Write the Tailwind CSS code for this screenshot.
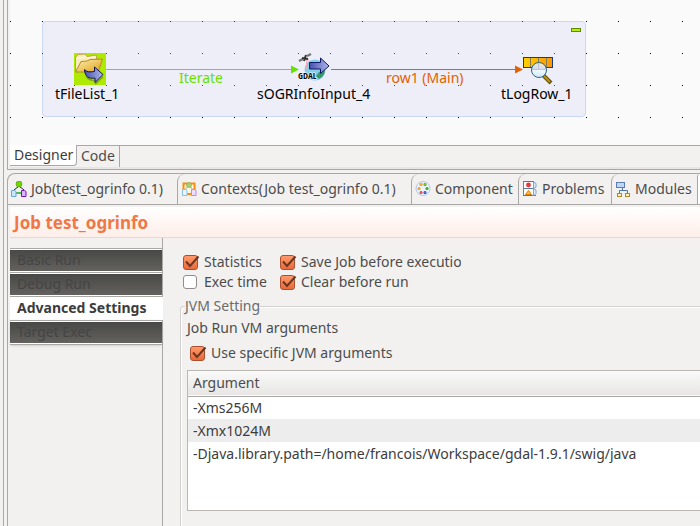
<!DOCTYPE html>
<html lang="en">
<head>
<meta charset="utf-8">
<title>Job test_ogrinfo</title>
<script src="https://cdn.jsdelivr.net/npm/@tailwindcss/browser@4"></script>
</head>
<body class="flex min-h-screen overflow-hidden bg-[#f2f1f0] pl-[3px] font-['Noto_Sans','Open_Sans',sans-serif] text-sm text-[#4c4c4c]">
<div class="flex min-w-0 flex-1 flex-col border-l border-[#aaa8a6] pl-[3px]">

  <!-- Editor -->
  <section class="border-b border-l border-[#aaa8a6] pl-[2px]" aria-label="Designer">
    <div class="relative h-[145px] overflow-hidden bg-[#fafafa] text-black">
      <svg class="absolute inset-0 h-full w-full" aria-hidden="true">
        <defs>
          <pattern id="dots" width="32" height="32" y="21" patternUnits="userSpaceOnUse"><rect width="1" height="1" fill="#000"/></pattern>
        </defs>
        <rect y="21" width="100%" height="100" fill="url(#dots)"/>
      </svg>
      <div class="absolute left-8 top-[21px] h-24 w-[544px] rounded border border-[#cbd8f5] bg-[#eeeef9]"></div>
      <svg class="absolute inset-0 h-full w-full" aria-hidden="true">
        <rect y="21" width="100%" height="100" fill="url(#dots)" opacity=".7"/>
        <path d="M96 69.500H284" stroke="#66e100" fill="none"/>
        <path d="M281 65.500l8 4-8 4z" fill="#66e100"/>
        <path d="M321 69.500H507" stroke="#e66000" fill="none"/>
        <path d="M505 65.500l8 4-8 4z" fill="#e66000"/>
      </svg>
      <button class="absolute left-[561px] top-7 h-1 w-[10px] border border-[#5c8a00] bg-[#b8f000]" aria-label="Collapse"></button>

      <svg class="absolute left-16 top-[53px]" width="32" height="32" viewBox="0 0 32 32" aria-hidden="true">
        <defs>
          <linearGradient id="fold" x1="0" y1="0" x2="1" y2="1"><stop offset="0" stop-color="#fff0b0"/><stop offset="1" stop-color="#dda018"/></linearGradient>
          <linearGradient id="arr" x1="0" y1="0" x2="1" y2="0"><stop offset="0" stop-color="#4750ac"/><stop offset="1" stop-color="#aeb8ec"/></linearGradient>
        </defs>
        <rect width="32" height="32" fill="#aeea00"/>
        <path d="M1.500 18V4.500L4 1.500l7-.5 2 2.500 9-1.500 1 5V18z" fill="#faedbd" stroke="#c79f50"/>
        <path d="M3 5.500l9-1.500M13 5l9-1" stroke="#fffbe7"/>
        <path d="M1.500 19L7 8.500l6-.5 3-1.500 12.500-.5-4.500 13z" fill="url(#fold)" stroke="#b5862a"/>
        <path d="M12 23c3 5 9 4.500 10 4.500v3l7-7" fill="none" stroke="#7ea22a" stroke-width="1.500"/>
        <path d="M10.500 16.500c2 2.500 5 2.800 10 2V14l8.500 7.500-8 8V25c-6 1-10-1-10.500-8.500z" fill="url(#arr)" stroke="#111457"/>
      </svg>

      <svg class="absolute left-[287px] top-[52px]" width="34" height="32" viewBox="0 0 34 32" aria-hidden="true">
        <circle cx="18" cy="18" r="10.500" fill="#85ceea"/>
        <path d="M22 20l6-2c0 4-2 7-6 9l-3-3z" fill="#3b9866"/>
        <path d="M10 7l-1 11M11 7l4 8" stroke="#f4a9b2"/>
        <path d="M2 9l4-2M10 4l4-2" stroke="#777" stroke-width="2.500"/>
        <path d="M5 6l6 1M9 3l-2 6" stroke="#333" stroke-width="2"/>
        <path d="M12.500 10.500h11V6l8.500 8-8.500 7.500v-4.500h-11z" fill="url(#arr)" stroke="#101765"/>
        <text x="1" y="27" font-family="Liberation Sans Narrow, Open Sans Condensed, DejaVu Sans Condensed, sans-serif" font-size="9" font-weight="700" fill="#000" stroke="#fff" stroke-width="1" paint-order="stroke">GDAL</text>
      </svg>

      <svg class="absolute left-[513px] top-[56px]" width="32" height="32" viewBox="0 0 32 32" aria-hidden="true">
        <defs>
          <linearGradient id="row"><stop offset="0" stop-color="#ffd000"/><stop offset="1" stop-color="#ff9500"/></linearGradient>
          <linearGradient id="lens" x1="0" y1="0" x2="0" y2="1"><stop offset="0" stop-color="#f8e8b8"/><stop offset=".4" stop-color="#d5def0"/><stop offset=".5" stop-color="#f0f9ff"/><stop offset="1" stop-color="#d0e8f8"/></linearGradient>
        </defs>
        <rect x=".5" y="1.500" width="29" height="10" fill="url(#row)" stroke="#173a91"/>
        <path d="M7.500 2v9M15.500 2v9M23.500 2v9" stroke="#887d52"/>
        <path d="M20 19l8 8" stroke="#69520a" stroke-width="4"/>
        <path d="M21 20l6 6" stroke="#b79012" stroke-width="2"/>
        <circle cx="16" cy="14" r="7.500" fill="url(#lens)" stroke="#2a647e"/>
        <path d="M15.500 7v6M9 13.500h14" stroke="#b9c4e5"/>
      </svg>

      <span class="absolute left-[45px] top-[84px] leading-5">tFileList_1</span>
      <span class="absolute left-[247px] top-[84px] leading-5">sOGRInfoInput_4</span>
      <span class="absolute left-[491px] top-[84px] leading-5">tLogRow_1</span>
      <span class="absolute left-[169px] top-[68px] leading-5 text-[#66e100]">Iterate</span>
      <span class="absolute left-[376px] top-[68px] leading-5 text-[#e66000]">row1 (Main)</span>
    </div>
    <div class="flex h-6 border-b-2 border-[#e6e5e3] leading-5" role="tablist">
      <button role="tab" aria-selected="true" class="h-[21px] w-[67px] rounded-br border-b border-r border-[#aaa8a6] bg-white pl-1 text-left text-[#3c3c3c]">Designer</button>
      <button role="tab" aria-selected="false" class="h-[22px] w-[43px] border-r border-t border-[#aaa8a6] pb-0.5 pl-1 text-left leading-[19px]">Code</button>
      <div class="flex-1 border-t border-[#aaa8a6]"></div>
    </div>
  </section>

  <!-- Views -->
  <section class="mt-[3px] flex flex-1 flex-col rounded-tl-lg border-l border-t border-[#aaa8a6]" aria-label="Job view">
    <div class="flex h-[31px] overflow-hidden border-b border-[#aaa8a6] leading-[30px]" role="tablist">
      <button role="tab" class="flex w-[169px] shrink-0 items-center gap-1 whitespace-nowrap pl-[3px]">
        <svg class="shrink-0" width="16" height="16" viewBox="0 0 16 16" aria-hidden="true">
          <path d="M8 5L3 9M8 5l5 4" stroke="#222"/><path d="M5 12h6" stroke="#1da51d" stroke-width="1.500"/>
          <circle cx="8" cy="3" r="3" fill="#72d500" stroke="#489c00" stroke-width=".6"/>
          <path d="M.5 9.500h3l1.500 1v5H.5z" fill="#c5e6ff" stroke="#6ca6d6"/>
          <path d="M10.500 9.500h3l1.500 1v5h-4.500z" fill="#d8b8ff" stroke="#7212c8"/>
        </svg>Job(test_ogrinfo 0.1)</button>
      <button role="tab" class="flex w-[234px] shrink-0 items-center gap-1 whitespace-nowrap rounded-tl-lg border-l border-[#aaa8a6] pl-[3px]">
        <svg class="shrink-0" width="16" height="16" viewBox="0 0 16 16" aria-hidden="true">
          <path d="M2.500 9V2.500h11V13h-11" fill="#fff7df" stroke="#ff8a0c" stroke-width="2"/>
          <path d="M8 4L4 9M8 4l4 5" stroke="#9aa6a0"/>
          <circle cx="8" cy="4" r="2.500" fill="#a8cf7a" stroke="#78a94b" stroke-width=".6"/>
          <path d="M1.500 8.500h3l1.500 1v5H1.500z" fill="#e7f5ff" stroke="#87c1ea"/>
          <path d="M10.500 8.500h3l1.500 1v5h-4.500z" fill="#f1dcff" stroke="#bf86ec"/>
        </svg>Contexts(Job test_ogrinfo 0.1)</button>
      <button role="tab" class="flex w-[107px] shrink-0 items-center gap-1 whitespace-nowrap rounded-tl-lg border-l border-[#aaa8a6] pl-[3px]">
        <svg class="shrink-0" width="16" height="16" viewBox="0 0 16 16" aria-hidden="true">
          <circle cx="8" cy="7.500" r="7" fill="#edf3fc" stroke="#b5c7e5"/>
          <g fill="#fff" stroke-width="1.200"><circle cx="6" cy="3.500" r="1" stroke="#f29b00"/><circle cx="10" cy="3.500" r="1" stroke="#6aa700"/><circle cx="4" cy="7.500" r="1" stroke="#f29b00"/><circle cx="12" cy="7.500" r="1" stroke="#25a800"/><circle cx="6" cy="11.500" r="1" stroke="#e03b4b"/><circle cx="10" cy="11.500" r="1" stroke="#2444bd"/></g>
        </svg>Component</button>
      <button role="tab" class="flex w-[93px] shrink-0 items-center gap-1 whitespace-nowrap rounded-tl-lg border-l border-[#aaa8a6] pl-[3px]">
        <svg class="shrink-0" width="16" height="16" viewBox="0 0 16 16" aria-hidden="true">
          <path d="M1.500 .5v14" stroke="#8a8452"/><path d="M1 .5h11M1 14.500h13" stroke="#58789f"/>
          <path d="M2 1h9v6H2zM2 8h9v6H2z" fill="#fff"/><path d="M2 7.500h9" stroke="#58789f"/>
          <path d="M11.500 1l2.500 1.500v3.500l-2.500 1.500 2.500 1.500v3.500l-2 2h-.5z" fill="#e6f1fb" stroke="#7ba3cb"/>
          <circle cx="6.500" cy="4" r="2.400" fill="#df3b43"/><path d="M6.500 9.500L9.500 13.500h-6z" fill="#ffc34c" stroke="#dc7b00"/>
        </svg>Problems</button>
      <button role="tab" class="flex w-[86px] shrink-0 items-center gap-1 whitespace-nowrap rounded-tl-lg border-l border-[#aaa8a6] pl-[3px]">
        <svg class="shrink-0" width="16" height="16" viewBox="0 0 16 16" aria-hidden="true">
          <path d="M7.500 7v2.500M4.500 12V9.500h8V12" fill="none" stroke="#5073ac"/>
          <rect x="1.500" y="1.500" width="8" height="5" fill="#bfd7f2" stroke="#5b7db5"/>
          <g fill="#fff4b4" stroke="#b18b20"><rect x="2.500" y="12.500" width="4" height="3"/><rect x="10.500" y="12.500" width="4" height="3"/></g>
        </svg>Modules</button>
      <div class="flex-1 rounded-tl-lg border-l border-[#aaa8a6] bg-white"></div>
    </div>

    <div class="flex flex-1 flex-col pl-[2px] pt-[2px]">
      <h1 class="h-[31px] border-b border-[#f3d5ca] bg-linear-to-b from-white to-[#fdeee9] pl-1 text-[17px] font-bold leading-[31px] text-[#f07746]">Job test_ogrinfo</h1>
      <div class="flex flex-1">
        <nav class="w-[153px] shrink-0 border-r border-[#aaa8a6] pt-[10px]">
          <a href="#basic" class="block h-6 border-t border-[#aaa8a6] bg-white py-px leading-5"><span class="block h-[21px] bg-linear-to-b from-[#484846] to-[#63625e] pl-[7px] text-[#454545]">Basic Run</span></a>
          <a href="#debug" class="block h-6 border-t border-[#aaa8a6] bg-white py-px leading-5"><span class="block h-[21px] bg-linear-to-b from-[#484846] to-[#63625e] pl-[7px] text-[#454545]">Debug Run</span></a>
          <a href="#advanced" class="-mr-px block h-6 border-t border-[#aaa8a6] bg-white pl-[7px] font-bold leading-[22px] text-[#3c3c3c]">Advanced Settings</a>
          <a href="#target" class="block h-[25px] border-y border-[#aaa8a6] bg-white py-px leading-5 shadow-sm"><span class="block h-[21px] bg-linear-to-b from-[#484846] to-[#63625e] pl-[7px] text-[#454545]">Target Exec</span></a>
        </nav>

        <form class="min-w-0 flex-1 pl-[17px] pt-[14px]">
          <div class="grid grid-cols-[97px_181px] pl-[3px] leading-5">
            <label class="flex h-5 items-center gap-1.5"><span class="relative size-[15px] shrink-0"><input type="checkbox" checked class="block size-[15px] appearance-none rounded-[3px] border border-[#a9502d] bg-linear-to-b from-[#ff9a6b] to-[#e9693b]"><svg class="pointer-events-none absolute left-0 top-0 overflow-visible" width="16" height="15" viewBox="0 0 16 15"><path d="M3 6.500l4 4.500 8.500-9.500" fill="none" stroke="#6b3620" stroke-width="2"/></svg></span>Statistics</label>
            <label class="flex h-5 items-center gap-1.5 overflow-hidden whitespace-nowrap"><span class="relative size-[15px] shrink-0"><input type="checkbox" checked class="block size-[15px] appearance-none rounded-[3px] border border-[#a9502d] bg-linear-to-b from-[#ff9a6b] to-[#e9693b]"><svg class="pointer-events-none absolute left-0 top-0 overflow-visible" width="16" height="15" viewBox="0 0 16 15"><path d="M3 6.500l4 4.500 8.500-9.500" fill="none" stroke="#6b3620" stroke-width="2"/></svg></span><span class="overflow-hidden">Save Job before execution</span></label>
            <label class="flex h-5 items-center gap-1.5"><span class="relative size-[15px] shrink-0"><input type="checkbox" class="block size-[14px] appearance-none rounded-[3px] border border-[#8f8e8c] bg-white"></span>Exec time</label>
            <label class="flex h-5 items-center gap-1.5"><span class="relative size-[15px] shrink-0"><input type="checkbox" checked class="block size-[15px] appearance-none rounded-[3px] border border-[#a9502d] bg-linear-to-b from-[#ff9a6b] to-[#e9693b]"><svg class="pointer-events-none absolute left-0 top-0 overflow-visible" width="16" height="15" viewBox="0 0 16 15"><path d="M3 6.500l4 4.500 8.500-9.500" fill="none" stroke="#6b3620" stroke-width="2"/></svg></span>Clear before run</label>
          </div>

          <fieldset class="mt-1 h-[230px] rounded-tl border-l border-t border-[#d3d1ce] pl-1.5 shadow-[inset_1px_1px_0_#fff]">
            <legend class="-ml-0.5 h-5 leading-5 text-[#6b6b6b]">JVM Setting</legend>
            <div class="h-6 leading-6">Job Run VM arguments</div>
            <label class="flex h-[26px] items-center gap-1.5 pl-[3px]"><span class="relative size-[15px] shrink-0"><input type="checkbox" checked class="block size-[15px] appearance-none rounded-[3px] border border-[#a9502d] bg-linear-to-b from-[#ff9a6b] to-[#e9693b]"><svg class="pointer-events-none absolute left-0 top-0 overflow-visible" width="16" height="15" viewBox="0 0 16 15"><path d="M3 6.500l4 4.500 8.500-9.500" fill="none" stroke="#6b3620" stroke-width="2"/></svg></span>Use specific JVM arguments</label>
            <div class="mt-1 h-[141px] border-y border-l border-[#bbb8b3] bg-white">
              <table class="w-full text-left">
                <thead><tr class="h-[25px] border-b border-[#aaa8a6] bg-linear-to-b from-[#fafafa] to-[#e7e6e4]"><th class="p-0 pl-[5px] font-normal">Argument</th></tr></thead>
                <tbody class="text-[#3c3c3c]">
                  <tr class="h-[23px]"><td class="p-0 pl-[5px]">-Xms256M</td></tr>
                  <tr class="h-[23px] bg-[#ededed]"><td class="p-0 pl-[5px]">-Xmx1024M</td></tr>
                  <tr class="h-[23px]"><td class="p-0 pl-[5px]">-Djava.library.path=/home/francois/Workspace/gdal-1.9.1/swig/java</td></tr>
                </tbody>
              </table>
            </div>
          </fieldset>
        </form>
      </div>
    </div>
  </section>
</div>
</body>
</html>
